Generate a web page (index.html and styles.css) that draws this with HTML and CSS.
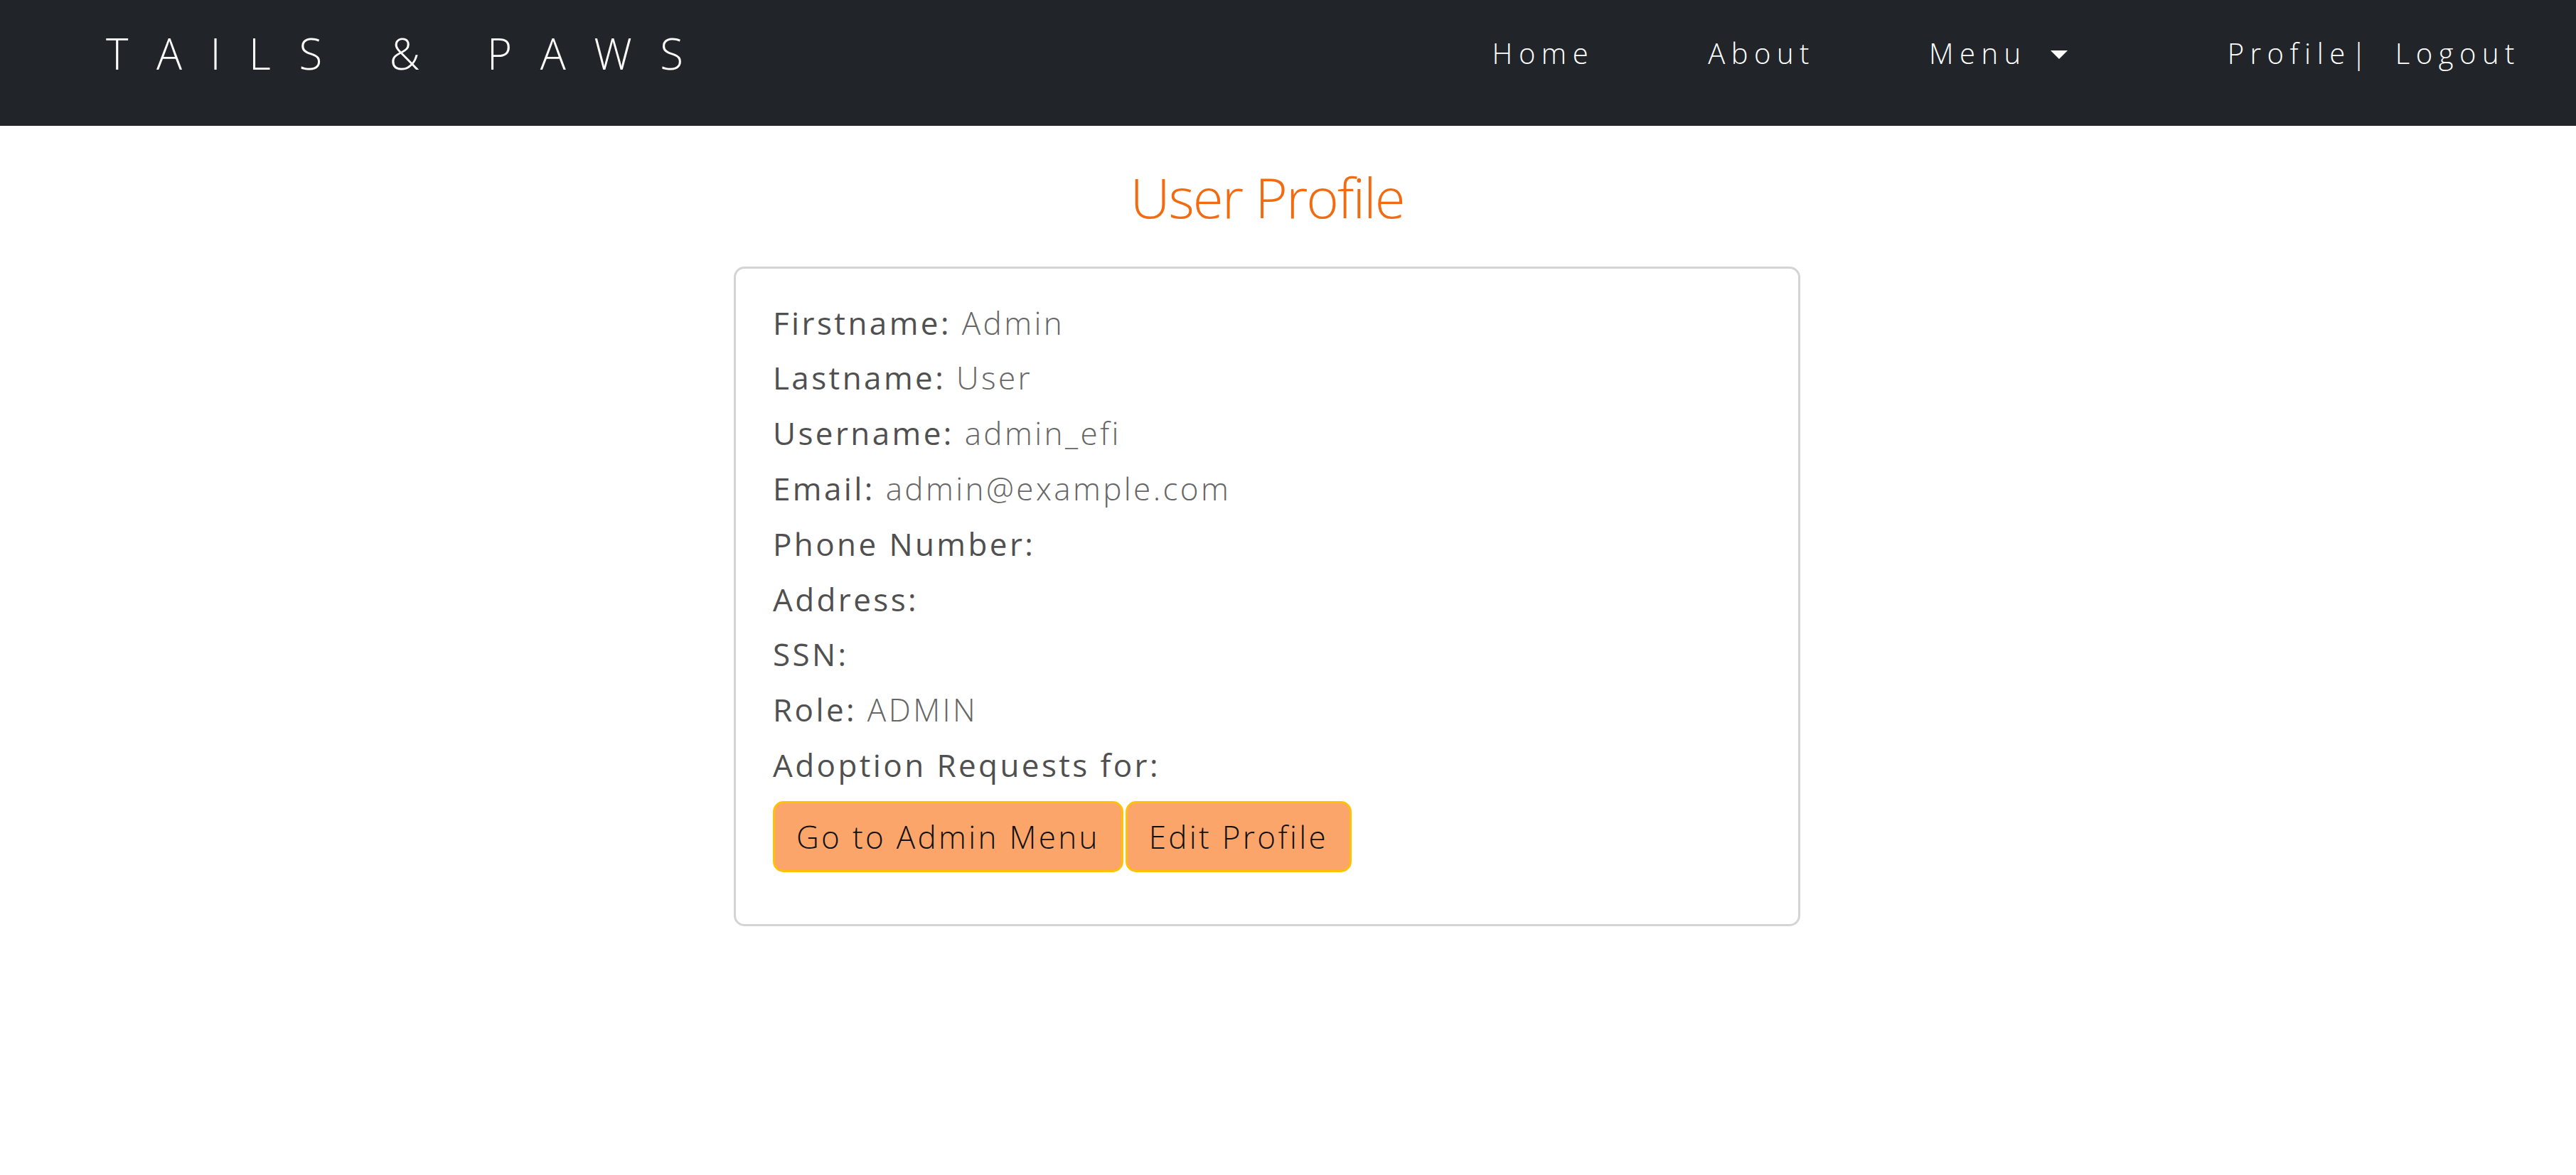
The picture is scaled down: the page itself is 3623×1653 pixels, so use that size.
FILE: index.html
```html
<!DOCTYPE html>
<html lang="en">
<head>
<meta charset="utf-8">
<title>Tails &amp; Paws - User Profile</title>
<link rel="stylesheet" href="styles.css">
</head>
<body>
<nav class="navbar">
  <a class="brand" href="#">TAILS &amp; PAWS</a>
  <ul class="nav-links">
    <li><a href="#" class="nav-link">Home</a></li>
    <li><a href="#" class="nav-link">About</a></li>
    <li><a href="#" class="nav-link dropdown-toggle">Menu</a></li>
  </ul>
  <div class="nav-user">
    <a href="#" class="nav-link">Profile|</a>
    <a href="#" class="nav-link">Logout</a>
  </div>
</nav>
<main class="content">
  <h2 class="page-title">User Profile</h2>
  <section class="card">
    <p class="row"><span class="label">Firstname:</span> <span class="value">Admin</span></p>
    <p class="row"><span class="label">Lastname:</span> <span class="value">User</span></p>
    <p class="row"><span class="label">Username:</span> <span class="value">admin_efi</span></p>
    <p class="row"><span class="label">Email:</span> <span class="value">admin@example.com</span></p>
    <p class="row"><span class="label">Phone Number:</span> <span class="value"></span></p>
    <p class="row"><span class="label">Address:</span> <span class="value"></span></p>
    <p class="row"><span class="label">SSN:</span> <span class="value"></span></p>
    <p class="row"><span class="label">Role:</span> <span class="value">ADMIN</span></p>
    <p class="row"><span class="label">Adoption Requests for:</span></p>
    <div class="actions">
      <a href="#" class="btn">Go to Admin Menu</a>
      <a href="#" class="btn">Edit Profile</a>
    </div>
  </section>
</main>
</body>
</html>
```

FILE: styles.css
```css
html, body {
  margin: 0;
  padding: 0;
  background: #ffffff;
}

body {
  font-family: "Open Sans", "Liberation Sans", sans-serif;
  color: #555555;
}

a {
  text-decoration: none;
}

.navbar {
  height: 177px;
  box-sizing: border-box;
  background: #212529;
  display: flex;
  align-items: center;
  padding: 0 78px 28px 149px;
}

.brand {
  color: #ffffff;
  font-size: 60px;
  font-weight: 300;
  letter-spacing: 39.5px;
  white-space: nowrap;
}

.nav-links {
  list-style: none;
  margin: 0 0 0 auto;
  padding: 0;
  display: flex;
  gap: 160px;
}

.nav-link {
  color: #ffffff;
  font-size: 40px;
  font-weight: 300;
  letter-spacing: 8.5px;
  white-space: nowrap;
}

.dropdown-toggle::after {
  content: "";
  display: inline-block;
  vertical-align: 7px;
  margin-left: 33px;
  border-top: 12px solid #ffffff;
  border-left: 12px solid transparent;
  border-right: 12px solid transparent;
}

.nav-user {
  display: flex;
  gap: 32px;
  margin-left: 225px;
}

.content {
  display: flex;
  flex-direction: column;
  align-items: center;
  margin-right: 59px;
}

.page-title {
  margin: 54px 0 50px;
  font-size: 78px;
  line-height: 1.2;
  font-weight: 300;
  letter-spacing: -2px;
  color: #f26b10;
}

.card {
  width: 1500px;
  box-sizing: border-box;
  border: 3px solid #d4d4d4;
  border-radius: 15px;
  padding: 38px 52px 36px;
}

.row {
  margin: 0;
  font-size: 44px;
  line-height: 77.8px;
  letter-spacing: 3.4px;
  white-space: nowrap;
}

.label {
  font-weight: 400;
  color: #505050;
}

.value {
  font-weight: 300;
  color: #666666;
}

.actions {
  display: flex;
  gap: 3px;
  margin: 11px 0 37px;
}

.btn {
  display: inline-block;
  background: #fca56b;
  border: 3px solid #ffc107;
  border-radius: 15px;
  padding: 14px 30px;
  font-size: 44px;
  line-height: 66px;
  font-weight: 300;
  letter-spacing: 3.3px;
  color: #111111;
}
```
